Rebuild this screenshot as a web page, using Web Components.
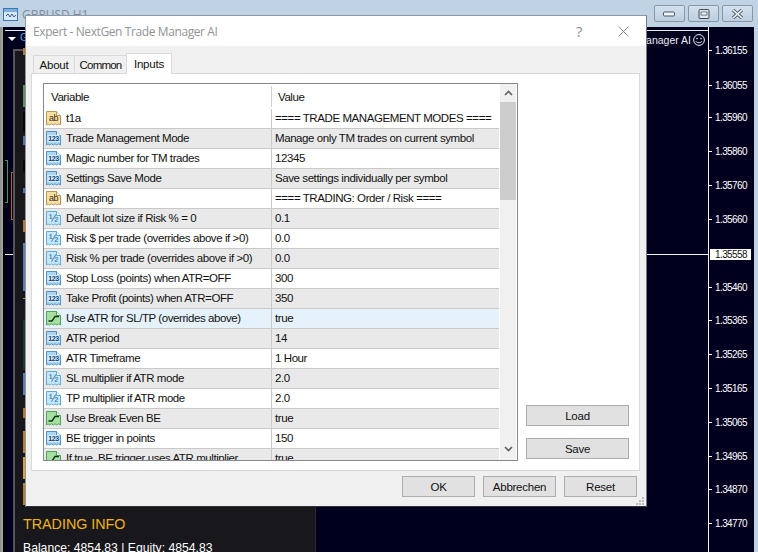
<!DOCTYPE html>
<html><head><meta charset="utf-8"><title>NextGen Trade Manager AI</title>
<style>html,body{margin:0;padding:0;background:#c0d3e5}</style></head>
<body>
<x-desktop>
  <x-chart-window caption="GBPUSD H1"></x-chart-window>
  <x-dialog caption="Expert - NextGen Trade Manager AI">
    <x-tabs tabs="About,Common,Inputs" active="2">
      <x-param-table>
        <x-param-row kind="ab" name="t1a">==== TRADE MANAGEMENT MODES ====</x-param-row>
        <x-param-row kind="int" name="Trade Management Mode">Manage only TM trades on current symbol</x-param-row>
        <x-param-row kind="int" name="Magic number for TM trades">12345</x-param-row>
        <x-param-row kind="int" name="Settings Save Mode">Save settings individually per symbol</x-param-row>
        <x-param-row kind="ab" name="Managing">==== TRADING: Order / Risk ====</x-param-row>
        <x-param-row kind="dbl" name="Default lot size if Risk % = 0">0.1</x-param-row>
        <x-param-row kind="dbl" name="Risk $ per trade (overrides above if &gt;0)">0.0</x-param-row>
        <x-param-row kind="dbl" name="Risk % per trade (overrides above if &gt;0)">0.0</x-param-row>
        <x-param-row kind="int" name="Stop Loss (points) when ATR=OFF">300</x-param-row>
        <x-param-row kind="int" name="Take Profit (points) when ATR=OFF">350</x-param-row>
        <x-param-row kind="bool" active name="Use ATR for SL/TP (overrides above)">true</x-param-row>
        <x-param-row kind="int" name="ATR period">14</x-param-row>
        <x-param-row kind="int" name="ATR Timeframe">1 Hour</x-param-row>
        <x-param-row kind="dbl" name="SL multiplier if ATR mode">2.0</x-param-row>
        <x-param-row kind="dbl" name="TP multiplier if ATR mode">2.0</x-param-row>
        <x-param-row kind="bool" name="Use Break Even BE">true</x-param-row>
        <x-param-row kind="int" name="BE trigger in points">150</x-param-row>
        <x-param-row kind="bool" name="If true, BE trigger uses ATR multiplier">true</x-param-row>
      </x-param-table>
      <x-side-actions slot="side">
        <x-btn wide>Load</x-btn>
        <x-btn wide>Save</x-btn>
      </x-side-actions>
    </x-tabs>
    <x-btn slot="footer">OK</x-btn>
    <x-btn slot="footer">Abbrechen</x-btn>
    <x-btn slot="footer">Reset</x-btn>
  </x-dialog>
</x-desktop>
<script>
const def=(name,css,html,init)=>{
  customElements.define(name,class extends HTMLElement{
    connectedCallback(){
      if(this.shadowRoot)return;
      const r=this.attachShadow({mode:'open'});
      const h=typeof html==='function'?html(this):html;
      r.innerHTML='<style>'+css+'</style>'+h;
      if(init)init(this,r);
    }
  });
};
const SANS='"Liberation Sans",Arial,sans-serif';

def('x-desktop',`:host{display:block;position:relative;width:758px;height:552px;overflow:hidden;font-family:${SANS}}`,'<slot></slot>');

const LABELS=[[1.36155,50],[1.36055,85],[1.35960,117.5],[1.35860,151.5],[1.35760,185.5],[1.35660,219.5],[1.35460,287.5],[1.35365,320.5],[1.35265,354.5],[1.35165,388.5],[1.35065,422.5],[1.34965,456.5],[1.34870,489.5],[1.34770,523.5]];
const BARS=[[48,7,'#b9762a',2],[85,22,'#5c8f5e',2],[112,20,'#050505',2],[136,9,'#4f74a8',2],[160,12,'#050505',2],[188,5,'#4f74a8',2],[220,12,'#b9762a',2],[243,48,'#5a7fae',2],[298,1,'#c98a30',2],[320,50,'#1c3a22',2],[373,22,'#5a7fae',2],[408,10,'#b9762a',2],[431,22,'#b9802f',2],[457,22,'#e0a030',2],[483,22,'#b9802f',2]];

def('x-chart-window',`
:host{display:block;position:absolute;inset:0;background:#c0d3e5;display:flex;flex-direction:column}
.bar{height:27px;flex:none;display:flex;align-items:flex-start;gap:3px;padding:0 5px 0 3px;box-sizing:border-box}
.bar svg.logo{margin-top:7px;flex:none}
.cap{font:12px "Open Sans",sans-serif;color:#7f8c99;margin-top:6px;letter-spacing:0;flex:1}
.btns{display:flex;gap:3px;margin-top:5px;padding-right:0}
.btn{width:31px;height:17px;box-sizing:border-box;border:1px solid #8997a5;border-radius:2px;background:linear-gradient(#d3e1ee,#bccfe1);display:flex;align-items:center;justify-content:center}
.body{flex:1;display:flex;min-height:0;padding-right:4px;background:linear-gradient(90deg,#8d8d8d 0,#a9a9a9 3px,#050505 3px,#050505 5px,#c0d3e5 5px)}
.plot{margin-left:5px;flex:1;position:relative;background:#00001e;border-right:1px solid #f2f2f2;overflow:hidden}
.axis{width:45px;flex:none;background:#00001e;position:relative;color:#fff;overflow:hidden}
.top{position:absolute;left:0;right:0;top:3px;height:1px;background:#e8e8e8}
.price{position:absolute;left:0;right:0;top:227px;height:1px;background:#f5f5f5}
.tri{position:absolute;left:3px;top:10px;width:0;height:0;border:4px solid transparent;border-top:4px solid #fff;border-bottom:0}
.sym{position:absolute;left:15px;top:4px;font:11px ${SANS};color:#5aa0e0}
.ea{position:absolute;right:17px;top:7px;font:10.5px ${SANS};color:#e8eef8;letter-spacing:0}
.smile{position:absolute;right:3px;top:7px}
.g1{position:absolute;left:0;top:133px;width:3px;height:43px;border:1px solid #3f9a55;border-left:0;box-sizing:border-box}
.g2{position:absolute;left:6px;top:145px;width:3px;height:48px;border:1px solid #b5642a;border-right:0;box-sizing:border-box}
.panel{position:absolute;left:8px;top:22px;width:303px;height:510px;box-sizing:border-box;background:#18181c;border:2px solid #565656;border-width:2px 1px 0 2px;border-right-color:#2a2a2e;display:flex;flex-direction:column;justify-content:flex-end;padding:0 0 0 8px}
.s{position:absolute;left:8px}
h3{margin:0;font:400 14.3px ${SANS};color:#f0b418;line-height:18px;position:relative;top:-4px}
p{margin:0;font:12.2px ${SANS};color:#fff;line-height:18px;height:22px;position:relative;top:2px;white-space:nowrap}
.l{position:absolute;left:6px;font:10px/11px ${SANS};letter-spacing:-.6px;color:#fff;white-space:nowrap}
.t{position:absolute;left:0;width:3px;height:1px;background:#fff}
.cur{position:absolute;left:1px;width:41px;height:11px;top:222px;background:#fff;color:#111;font:10px/11px ${SANS};letter-spacing:-.6px;padding-left:5px;box-sizing:border-box}
`,host=>`
<div class="bar">
  <svg class="logo" width="16" height="15" viewBox="0 0 16 15"><rect x=".5" y="1.5" width="14" height="12" fill="#dbe8f5" stroke="#3a78b5"/><rect x="1" y="2" width="13" height="3" fill="#7fb0de"/><path d="M3 9l2-2 2 3 2-3 2 3 2-2" fill="none" stroke="#2a5f95"/></svg>
  <span class="cap">${host.getAttribute('caption')}</span>
  <div class="btns">
    <div class="btn"><svg width="13" height="7" viewBox="0 0 13 7"><rect x=".5" y="2" width="11" height="4" rx="1" fill="#eef3f8" stroke="#4a5560"/></svg></div>
    <div class="btn"><svg width="12" height="10" viewBox="0 0 12 10"><rect x="1" y=".5" width="10" height="9" rx="1" fill="#dbe6f0" stroke="#3f4a55"/><rect x="3" y="3" width="6" height="3" fill="#f2f6fa" stroke="#3f4a55" stroke-width=".7"/></svg></div>
    <div class="btn"><svg width="13" height="10" viewBox="0 0 13 10"><path d="M2 1l9 8M11 1l-9 8" stroke="#555f69" stroke-width="3.4"/><path d="M2 1l9 8M11 1l-9 8" stroke="#f4f7fa" stroke-width="1.6"/></svg></div>
  </div>
</div>
<div class="body">
  <div class="plot">
    <div class="top"></div><div class="price"></div>
    <div class="tri"></div><div class="sym">GBPUSD,H1</div>
    <div class="ea">NextGen Trade Manager AI</div>
    <svg class="smile" width="12" height="12" viewBox="0 0 12 12"><circle cx="6" cy="6" r="5.4" fill="none" stroke="#dfeaf6"/><circle cx="4" cy="4.6" r=".8" fill="#dfeaf6"/><circle cx="8" cy="4.6" r=".8" fill="#dfeaf6"/><path d="M3 7.2c1 2 5 2 6 0" fill="none" stroke="#dfeaf6"/></svg>
    <div class="g1"></div><div class="g2"></div>
    <div class="panel"><h3>TRADING INFO</h3><p>Balance: 4854.83 | Equity: 4854.83</p></div>
    ${BARS.map(b=>`<div class="s" style="left:18px;top:${b[0]-27}px;width:${b[3]}px;height:${b[1]}px;background:${b[2]}"></div>`).join('')}
  </div>
  <div class="axis">
    ${LABELS.map(([v,y])=>`<div class="t" style="top:${Math.floor(y)-27}px"></div><div class="l" style="top:${Math.floor(y)-27-5}px">${v.toFixed(5)}</div>`).join('')}
    <div class="cur">1.35558</div>
  </div>
</div>`);

def('x-dialog',`
:host{position:absolute;left:25px;top:15px;width:622px;height:492px;box-sizing:border-box;background:#f0f0f0;border:1px solid #8c99a4;border-right-color:#6f7a84;border-bottom:1px solid #2e3236;display:flex;flex-direction:column;color:#111}
.tb{height:30px;flex:none;background:#fff;display:flex;align-items:center;padding:0 17px 0 7px;font:12px "Open Sans",sans-serif;letter-spacing:-.4px;color:#8f9594}
.tb span{flex:1}
.q{font:15px "Open Sans",sans-serif;margin-right:36px;color:#8a8f8f}
.main{flex:none;padding:7px 6px 0 5px}
.foot{flex:none;display:flex;justify-content:flex-end;gap:8px;padding:5px 9px 0 0}
.grip{position:absolute;right:1px;bottom:1px}
`,host=>`
<div class="tb"><span>${host.getAttribute('caption')}</span><b class="q" style="font-weight:400">?</b>
<svg width="11" height="11" viewBox="0 0 11 11"><path d="M.5.5l10 10M10.5.5l-10 10" stroke="#8a8f8f" fill="none"/></svg></div>
<div class="main"><slot></slot></div>
<div class="foot"><slot name="footer"></slot></div>
<svg class="grip" width="9" height="8" viewBox="0 0 9 8" fill="#b8bcbc"><rect x="6" y="0" width="2" height="2"/><rect x="3" y="3" width="2" height="2"/><rect x="6" y="3" width="2" height="2"/><rect x="0" y="6" width="2" height="2"/><rect x="3" y="6" width="2" height="2"/><rect x="6" y="6" width="2" height="2"/></svg>`);

def('x-tabs',`
:host{display:block;font:11.5px ${SANS};color:#111}
.strip{display:flex;align-items:flex-end;height:21px;padding-left:2px;position:relative;z-index:1}
.tab{height:18px;box-sizing:border-box;border:1px solid #d9d9d9;border-bottom:0;border-right:0;display:flex;align-items:center;justify-content:center;line-height:16px;background:#f0f0f0;margin-bottom:1px;letter-spacing:-.2px}
.tab:nth-child(1){width:41px}
.tab:nth-child(2){width:52px;letter-spacing:-.8px}
.tab:nth-child(3){width:46px}
.tab.on{height:21px;background:#fff;border-right:1px solid #d9d9d9;margin-bottom:0}
.pane{height:398px;box-sizing:border-box;background:#fff;border:1px solid #d9d9d9;margin-top:-1px;display:flex;padding:9px 10px 9px 11px;gap:8px}
.side{flex:1;display:flex;align-items:flex-end;min-width:0}
`,host=>{
  const a=+host.getAttribute('active');
  return `<div class="strip">${host.getAttribute('tabs').split(',').map((t,i)=>`<div class="tab${i==a?' on':''}">${t}</div>`).join('')}</div>
  <div class="pane"><slot></slot><div class="side"><slot name="side"></slot></div></div>`;
});

def('x-param-table',`
:host{display:block;flex:none;width:475px;height:378px;box-sizing:border-box;border:1px solid #848990;position:relative;overflow:hidden;background:#fff;font:11.5px ${SANS};letter-spacing:-.42px}
.wrap{display:flex;height:100%}
.list{flex:none;width:455px;overflow:hidden}
.head{height:25px;display:grid;grid-template-columns:227px 1fr;align-items:center;color:#111;box-sizing:border-box}
.head div{padding-left:7px;height:21px;line-height:23px}
.head div+div{border-left:1px solid #d0d0d0;padding-left:6px}
.sb{flex:none;width:16px;margin-left:1px;background:#f0f0f0;display:flex;flex-direction:column;align-items:center}
.arrow{height:18px;flex:none;display:flex;align-items:center;justify-content:center}
.thumb{height:98px;width:100%;background:#cdcdcd;flex:none}
.fill{flex:1}
`,`<div class="wrap"><div class="list"><div class="head"><div>Variable</div><div>Value</div></div><slot></slot></div>
<div class="sb"><div class="arrow"><svg width="9" height="6" viewBox="0 0 9 6"><path d="M1 5l3.5-3.5L8 5" fill="none" stroke="#606060" stroke-width="1.6"/></svg></div><div class="thumb"></div><div class="fill"></div><div class="arrow" style="height:22px"><svg width="9" height="6" viewBox="0 0 9 6"><path d="M1 1l3.5 3.5L8 1" fill="none" stroke="#606060" stroke-width="1.6"/></svg></div></div></div>`);

const ICONS={
 ab:{f:'#f5dfa6',s:'#b8994f',inner:'<text x="7.5" y="11" text-anchor="middle" font-size="9" font-family="Liberation Sans" fill="#3a2c10">ab</text>'},
 int:{f:'#a9d6f5',s:'#4f93c7',inner:'<rect x="1.5" y="5" width="12" height="7" fill="#d5ecfa"/><text x="7.5" y="11" text-anchor="middle" font-size="7" font-weight="700" font-family="Liberation Sans" fill="#123f78">123</text>'},
 dbl:{f:'#c6e8fb',s:'#63acd8',inner:'<text x="7.5" y="11.5" text-anchor="middle" font-size="11" font-family="Liberation Sans" fill="#1e5f98">½</text>'},
 bool:{f:'#a5e0a0',s:'#4fa35a',inner:'<path d="M2.5 11H6L9 6.5h4" fill="none" stroke="#12351a" stroke-width="1.4"/>'}
};
def('x-param-row',`
:host{display:grid;grid-template-columns:227px 1fr;height:20px;box-sizing:border-box;border-bottom:1px solid #c9c9c9;background:#fff;font:11.5px/19px ${SANS};letter-spacing:-.42px;color:#111;white-space:nowrap}
:host(:nth-child(even)){background:#e9e9e9}
:host([active]){background:#e5f2fb}
.n{display:flex;align-items:center;gap:4px;padding-left:2px;overflow:hidden}
.n svg{flex:none}
.v{border-left:1px solid #c9c9c9;padding-left:3px;overflow:hidden}
`,host=>{
  const k=ICONS[host.getAttribute('kind')];
  return `<div class="n"><svg width="16" height="17" viewBox="0 0 16 17"><path d="M.5 1.5h10l4 4V15l-1.8-1.2L10.8 15 9 13.8 7.2 15 5.4 13.8 3.6 15 2 13.8.5 15z" fill="${k.f}" stroke="${k.s}"/><path d="M10.5 1.5v4h4" fill="#fff" stroke="${k.s}"/>${k.inner}</svg><span>${host.getAttribute('name')}</span></div><div class="v"><slot></slot></div>`;
});

def('x-side-actions',`:host{display:flex;flex-direction:column;gap:12px;width:103px;margin-bottom:2px}`,'<slot></slot>');
def('x-btn',`
:host{display:flex;align-items:center;justify-content:center;width:73px;height:21px;box-sizing:border-box;background:#e1e1e1;border:1px solid #adadad;font:11.5px ${SANS};letter-spacing:-.25px;color:#111}
:host([wide]){width:103px}
`,'<slot></slot>');
</script>
</body></html>
